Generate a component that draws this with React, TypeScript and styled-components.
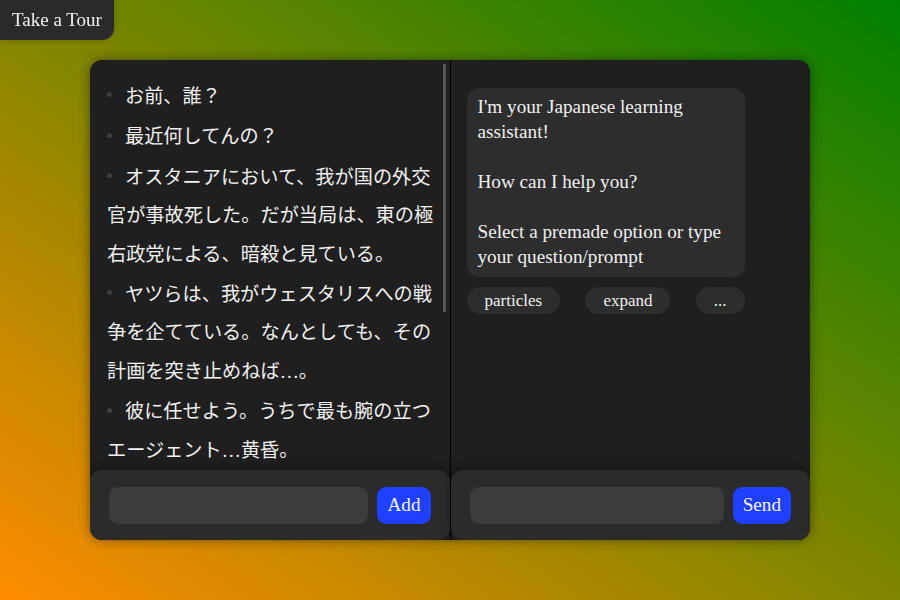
import React, { useLayoutEffect, useRef, useState } from "react";
import styled, { createGlobalStyle } from "styled-components";

const GlobalStyle = createGlobalStyle`
  html, body {
    margin: 0;
    padding: 0;
    height: 100%;
  }
  body {
    font-family: "Liberation Serif", "Noto Sans CJK JP", serif;
    background: linear-gradient(to top right, #ff8c00, #008000);
    color: #f0f0f0;
  }
  * { box-sizing: border-box; }
`;

const Page = styled.div`
  min-height: 100vh;
  display: flex;
  align-items: center;
  justify-content: center;
`;

const TourButton = styled.button`
  position: fixed;
  top: 0;
  left: 0;
  margin: 0;
  border: none;
  padding: 9px 12px;
  font-family: "Liberation Serif", serif;
  font-size: 19px;
  line-height: 22px;
  color: #f2f2f2;
  background: #2a2a2a;
  border-bottom-right-radius: 12px;
  box-shadow: 0 0 6px rgba(0, 0, 0, 0.25);
`;

const Card = styled.div`
  width: 720px;
  height: 480px;
  display: flex;
  background: #1f1f1f;
  border-radius: 12px;
  overflow: hidden;
  box-shadow: 0 0 12px rgba(0, 0, 0, 0.45);
`;

const Panel = styled.section<{ $divider?: boolean }>`
  flex: 1 1 0;
  min-width: 0;
  display: flex;
  flex-direction: column;
  border-left: ${(p) => (p.$divider ? "1px solid #000" : "none")};
`;

const ListFrame = styled.div`
  position: relative;
  flex: 1 1 0;
  min-height: 0;
  display: flex;
`;

const SentenceList = styled.ul`
  flex: 1 1 auto;
  min-height: 0;
  margin: 0;
  padding: 18px 8px 16px 17px;
  list-style: none;
  overflow-y: auto;
  scrollbar-width: none;
  font-family: "Liberation Serif", "Noto Sans CJK JP", serif;
  font-size: 19.2px;
  line-height: 38.4px;
  color: #f0f0f0;

  &::-webkit-scrollbar {
    display: none;
  }
`;

const ScrollThumb = styled.div`
  position: absolute;
  right: 4px;
  width: 3px;
  background: #565656;
  pointer-events: none;
`;

const Sentence = styled.li`
  margin: 0 0 2px 0;

  &::before {
    content: "";
    display: inline-block;
    width: 5px;
    height: 5px;
    border-radius: 50%;
    background: #3e3e3e;
    margin: 0 13px 0 0;
    vertical-align: 0.3em;
  }
`;

const ChatArea = styled.div`
  flex: 1 1 0;
  min-height: 0;
  padding: 28px 16px;
  overflow: hidden;
`;

const MessageGroup = styled.div`
  width: 278px;
  display: flex;
  flex-direction: column;
  gap: 10px;
`;

const Bubble = styled.div`
  background: #2d2d2d;
  border-radius: 12px;
  padding: 6px 11px 8px;
  font-size: 19.2px;
  line-height: 25px;
  white-space: pre-line;
  color: #f0f0f0;
`;

const ChipRow = styled.div`
  display: flex;
  justify-content: space-between;
`;

const Chip = styled.button`
  border: none;
  margin: 0;
  padding: 4px 18px;
  border-radius: 999px;
  background: #2d2d2d;
  color: #f0f0f0;
  font-family: "Liberation Serif", serif;
  font-size: 17px;
  line-height: 19px;
`;

const InputBar = styled.div`
  position: relative;
  height: 70px;
  flex: 0 0 70px;
  display: flex;
  align-items: center;
  gap: 9px;
  padding: 0 19px;
  background: #2b2b2b;
  border-radius: 12px;
  box-shadow: 0 -2px 12px rgba(0, 0, 0, 0.35);
`;

const TextInput = styled.input`
  flex: 1 1 auto;
  min-width: 0;
  height: 37px;
  border: none;
  outline: none;
  border-radius: 9px;
  background: #3b3b3b;
  color: #f0f0f0;
  padding: 0 12px;
  font-family: "Liberation Serif", "Noto Sans CJK JP", serif;
  font-size: 18px;
`;

const ActionButton = styled.button`
  flex: 0 0 auto;
  height: 37px;
  border: none;
  margin: 0;
  padding: 0 10px;
  border-radius: 9px;
  background: #2040ff;
  color: #f4f4ff;
  font-family: "Liberation Serif", serif;
  font-size: 19.2px;
`;

const sentences = [
  "お前、誰？",
  "最近何してんの？",
  "オスタニアにおいて、我が国の外交官が事故死した。だが当局は、東の極右政党による、暗殺と見ている。",
  "ヤツらは、我がウェスタリスへの戦争を企てている。なんとしても、その計画を突き止めねば…。",
  "彼に任せよう。うちで最も腕の立つエージェント…黄昏。",
  "ロイド・フォージャーとして、名門校に潜入せよ。",
  "任務のためには、妻と子供を一週間以内に用意しろ。",
  "オペレーション〈梟〉、これより開始する。",
];

const greeting =
  "I'm your Japanese learning assistant!\n\nHow can I help you?\n\nSelect a premade option or type your question/prompt";

function SentencePanel() {
  const listRef = useRef<HTMLUListElement>(null);
  const [thumb, setThumb] = useState({ top: 4, height: 248 });

  const measure = () => {
    const el = listRef.current;
    if (!el) return;
    const ch = el.clientHeight;
    const sh = el.scrollHeight;
    if (sh <= ch) {
      setThumb({ top: 4, height: 0 });
      return;
    }
    const track = ch - 8;
    const height = Math.max(20, (track * ch) / sh);
    const top = 4 + ((track - height) * el.scrollTop) / (sh - ch);
    setThumb({ top, height });
  };

  useLayoutEffect(() => {
    measure();
  }, []);

  return (
    <ListFrame>
      <SentenceList ref={listRef} onScroll={measure}>
        {sentences.map((s, i) => (
          <Sentence key={i}>{s}</Sentence>
        ))}
      </SentenceList>
      <ScrollThumb style={{ top: thumb.top, height: thumb.height }} />
    </ListFrame>
  );
}

export default function App() {
  return (
    <>
      <GlobalStyle />
      <TourButton>Take a Tour</TourButton>
      <Page>
        <Card>
          <Panel>
            <SentencePanel />
            <InputBar>
              <TextInput />
              <ActionButton>Add</ActionButton>
            </InputBar>
          </Panel>
          <Panel $divider>
            <ChatArea>
              <MessageGroup>
                <Bubble>{greeting}</Bubble>
                <ChipRow>
                  <Chip>particles</Chip>
                  <Chip>expand</Chip>
                  <Chip>...</Chip>
                </ChipRow>
              </MessageGroup>
            </ChatArea>
            <InputBar>
              <TextInput />
              <ActionButton>Send</ActionButton>
            </InputBar>
          </Panel>
        </Card>
      </Page>
    </>
  );
}
